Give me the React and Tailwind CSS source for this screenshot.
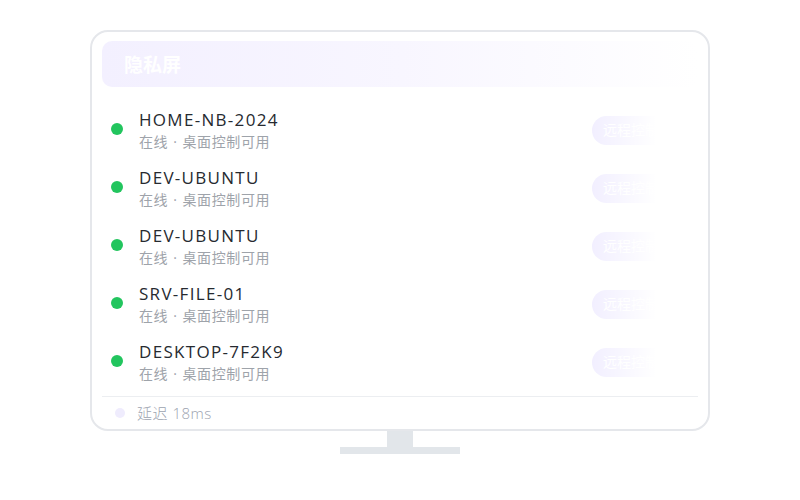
const devices = ['HOME-NB-2024', 'DEV-UBUNTU', 'DEV-UBUNTU', 'SRV-FILE-01', 'DESKTOP-7F2K9']

const font = { fontFamily: '"Open Sans", "Noto Sans CJK SC", sans-serif' }

function DeviceRow({ name }) {
  return (
    <div className="h-[58px] flex items-center pl-[9px]">
      <span className="w-[12px] h-[12px] rounded-full bg-[#22c55e] shrink-0 -mt-[2px]" />
      <div className="ml-[16px] flex flex-col">
        <span className="text-[17px] leading-[23px] text-[#262a30] tracking-[1.3px]">{name}</span>
        <span className="text-[14px] leading-[21px] text-[#9ea3aa] tracking-[0.6px]">
          在线<span className="mx-[5px]">·</span>桌面控制可用
        </span>
      </div>
      <button className="ml-auto mr-[28px] h-[29px] px-[11px] rounded-full bg-[#f1eeff] text-white text-[14px] leading-none">
        远程控制
      </button>
    </div>
  )
}

export default function App() {
  return (
    <div className="w-[800px] h-[500px] bg-white flex flex-col items-center pt-[30px]" style={font}>
      {/* Screen */}
      <div className="w-[620px] h-[401px] border-2 border-[#e5e7eb] rounded-[18px] px-[10px] pt-[9px] flex flex-col overflow-hidden">
        <div className="h-[46px] shrink-0 rounded-[10px] bg-gradient-to-r from-[#f3f0ff] via-[#f8f6ff] to-white flex items-center px-[22px]">
          <span className="text-white text-[19px] font-bold" style={{ fontFamily: '"Noto Sans CJK SC", sans-serif' }}>隐私屏</span>
        </div>

        <div className="relative mt-[14px]">
          {devices.map((d, i) => (
            <DeviceRow key={i} name={d} />
          ))}
          <div className="absolute top-0 bottom-0 right-0 w-[110px] bg-[linear-gradient(to_right,rgba(255,255,255,0),#ffffff_62%)]" />
        </div>

        <div className="mt-[5px] border-t border-[#eceef1] flex items-center pl-[13px] pt-[6px]">
          <span className="w-[10px] h-[10px] rounded-full bg-[#efecfd]" />
          <span className="ml-[12px] text-[15px] leading-[20px] text-[#9ca3af] font-light tracking-[0.5px]">延迟 18ms</span>
        </div>
      </div>

      {/* Stand */}
      <div className="w-[26px] h-[16px] bg-[#e2e6ea]" />
      <div className="w-[120px] h-[7px] bg-[#e2e6ea]" />
    </div>
  )
}
